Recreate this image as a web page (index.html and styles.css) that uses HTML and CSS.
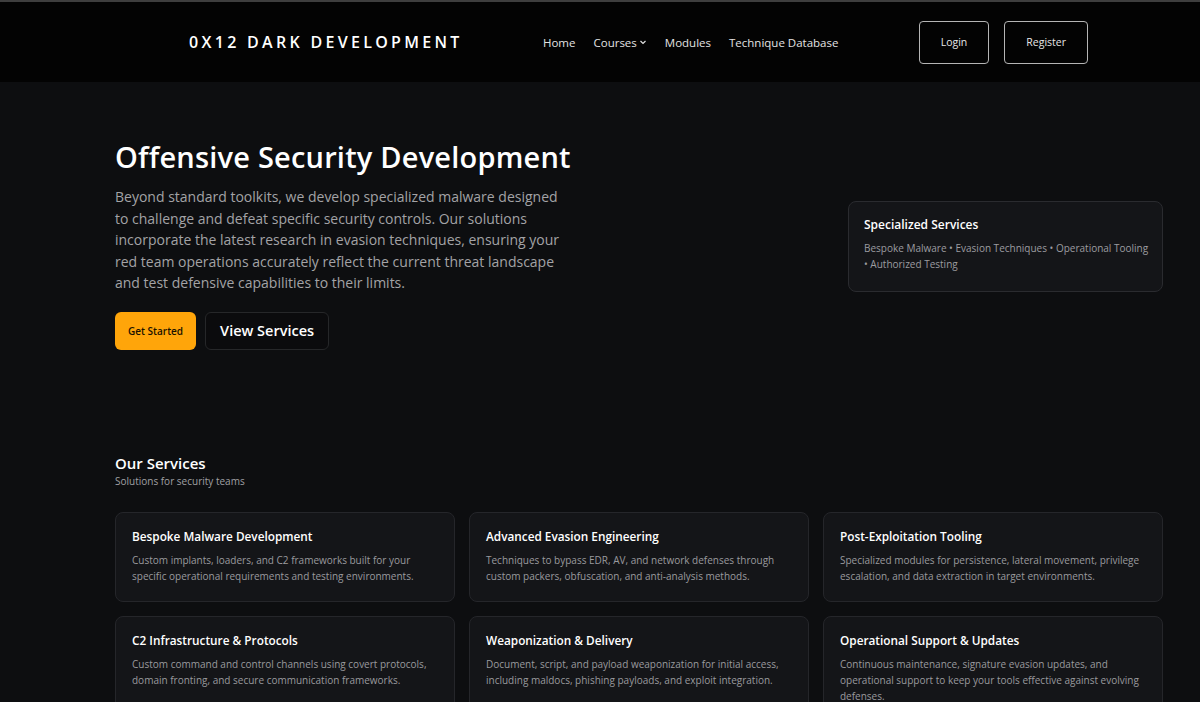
FILE: index.html
```html
<!DOCTYPE html>
<html lang="en">

<head>
    <meta charset="UTF-8">
    <meta name="viewport" content="width=device-width, initial-scale=1.0">
    <title>0X12 Dark Development</title>
    <link rel="stylesheet" href="styles.css">
</head>

<body>
    <header class="topbar">
        <div class="topbar-inner">
            <a href="#" class="logo">0X12 DARK DEVELOPMENT</a>
            <nav class="nav">
                <a href="#">Home</a>
                <a href="#" class="dropdown">Courses
                    <svg width="8" height="8" viewBox="0 0 8 8"><path d="M1.5 3l2.5 2.5L6.5 3" fill="none" stroke="currentColor" stroke-width="1.2" /></svg>
                </a>
                <a href="#">Modules</a>
                <a href="#">Technique Database</a>
            </nav>
            <div class="auth">
                <a href="#" class="btn-outline">Login</a>
                <a href="#" class="btn-outline">Register</a>
            </div>
        </div>
    </header>

    <main>
        <section class="hero">
            <div class="hero-text">
                <h1>Offensive Security Development</h1>
                <p>Beyond standard toolkits, we develop specialized malware designed to challenge and defeat specific security controls. Our solutions incorporate the latest research in evasion techniques, ensuring your red team operations accurately reflect the current threat landscape and test defensive capabilities to their limits.</p>
                <div class="hero-actions">
                    <a href="#" class="btn-primary">Get Started</a>
                    <a href="#" class="btn-dark">View Services</a>
                </div>
            </div>
            <div class="hero-card">
                <h3>Specialized Services</h3>
                <p>Bespoke Malware • Evasion Techniques • Operational Tooling • Authorized Testing</p>
            </div>
        </section>

        <section class="services">
            <h2>Our Services</h2>
            <p class="subtitle">Solutions for security teams</p>
            <div class="service-grid">
                <div class="card">
                    <h3>Bespoke Malware Development</h3>
                    <p>Custom implants, loaders, and C2 frameworks built for your specific operational requirements and testing environments.</p>
                </div>
                <div class="card">
                    <h3>Advanced Evasion Engineering</h3>
                    <p>Techniques to bypass EDR, AV, and network defenses through custom packers, obfuscation, and anti-analysis methods.</p>
                </div>
                <div class="card">
                    <h3>Post-Exploitation Tooling</h3>
                    <p>Specialized modules for persistence, lateral movement, privilege escalation, and data extraction in target environments.</p>
                </div>
                <div class="card">
                    <h3>C2 Infrastructure &amp; Protocols</h3>
                    <p>Custom command and control channels using covert protocols, domain fronting, and secure communication frameworks.</p>
                </div>
                <div class="card">
                    <h3>Weaponization &amp; Delivery</h3>
                    <p>Document, script, and payload weaponization for initial access, including maldocs, phishing payloads, and exploit integration.</p>
                </div>
                <div class="card">
                    <h3>Operational Support &amp; Updates</h3>
                    <p>Continuous maintenance, signature evasion updates, and operational support to keep your tools effective against evolving defenses.</p>
                </div>
            </div>
        </section>
    </main>
</body>

</html>
```

FILE: styles.css
```css
body {
    margin: 0;
    background-color: #0d0e10;
    color: #fff;
    font-family: "Open Sans", "Noto Sans", sans-serif;
}

a {
    text-decoration: none;
    color: inherit;
}

.topbar {
    background-color: #030303;
    border-top: 2px solid #3e3e3e;
}

.topbar-inner {
    height: 80px;
    display: flex;
    align-items: center;
    justify-content: space-between;
    padding: 0 112px 0 189px;
}

.logo {
    font-size: 16px;
    font-weight: 600;
    letter-spacing: 3.3px;
    color: #fff;
}

.nav {
    display: flex;
    gap: 18px;
    font-size: 11.5px;
    color: #e2e2e2;
}

.nav .dropdown {
    display: flex;
    align-items: center;
    gap: 2px;
}

.auth {
    display: flex;
    gap: 15px;
}

.btn-outline {
    display: flex;
    align-items: center;
    height: 41px;
    padding: 0 21px;
    border: 1px solid #b5b5b5;
    border-radius: 4px;
    font-size: 10.5px;
    color: #e6e6e6;
}

.hero {
    display: flex;
    align-items: center;
    justify-content: space-between;
    padding: 55px 37px 0 115px;
}

.hero-text {
    width: 480px;
}

.hero h1 {
    margin: 0 0 10px;
    font-size: 29px;
    font-weight: 600;
    letter-spacing: 0.2px;
}

.hero-text p {
    margin: 0;
    width: 445px;
    font-size: 14px;
    line-height: 21.6px;
    color: #a3a3a6;
}

.hero-actions {
    display: flex;
    gap: 9px;
    margin-top: 18px;
}

.btn-primary {
    display: flex;
    align-items: center;
    height: 38px;
    padding: 0 13px;
    border-radius: 6px;
    background-color: #ffa50a;
    color: #1a1200;
    font-size: 10px;
    font-weight: 600;
}

.btn-dark {
    display: flex;
    align-items: center;
    height: 36px;
    padding: 0 14px;
    border: 1px solid #262729;
    border-radius: 6px;
    background-color: #0b0b0d;
    font-size: 14.5px;
    font-weight: 600;
}

.hero-card {
    width: 290px;
    margin-top: 6px;
    padding: 14px 8px 19px 15px;
    background-color: #141518;
    border: 1px solid #2a2b2f;
    border-radius: 8px;
}

.hero-card h3 {
    margin: 0 0 7px;
    font-size: 12px;
    font-weight: 600;
}

.hero-card p {
    margin: 0;
    font-size: 10px;
    line-height: 16px;
    color: #9c9ca0;
}

.services {
    padding: 103px 37px 40px 115px;
}

.services h2 {
    margin: 0;
    font-size: 15px;
    font-weight: 600;
}

.services .subtitle {
    margin: 1px 0 24px;
    font-size: 10px;
    color: #a0a0a4;
}

.service-grid {
    display: grid;
    grid-template-columns: repeat(3, 1fr);
    gap: 14px;
}

.card {
    padding: 15px 16px 17px;
    background-color: #141518;
    border: 1px solid #25262a;
    border-radius: 8px;
}

.card h3 {
    margin: 0 0 8px;
    font-size: 11.8px;
    font-weight: 600;
}

.card p {
    margin: 0;
    font-size: 10px;
    line-height: 16px;
    color: #9a9a9e;
}
```
